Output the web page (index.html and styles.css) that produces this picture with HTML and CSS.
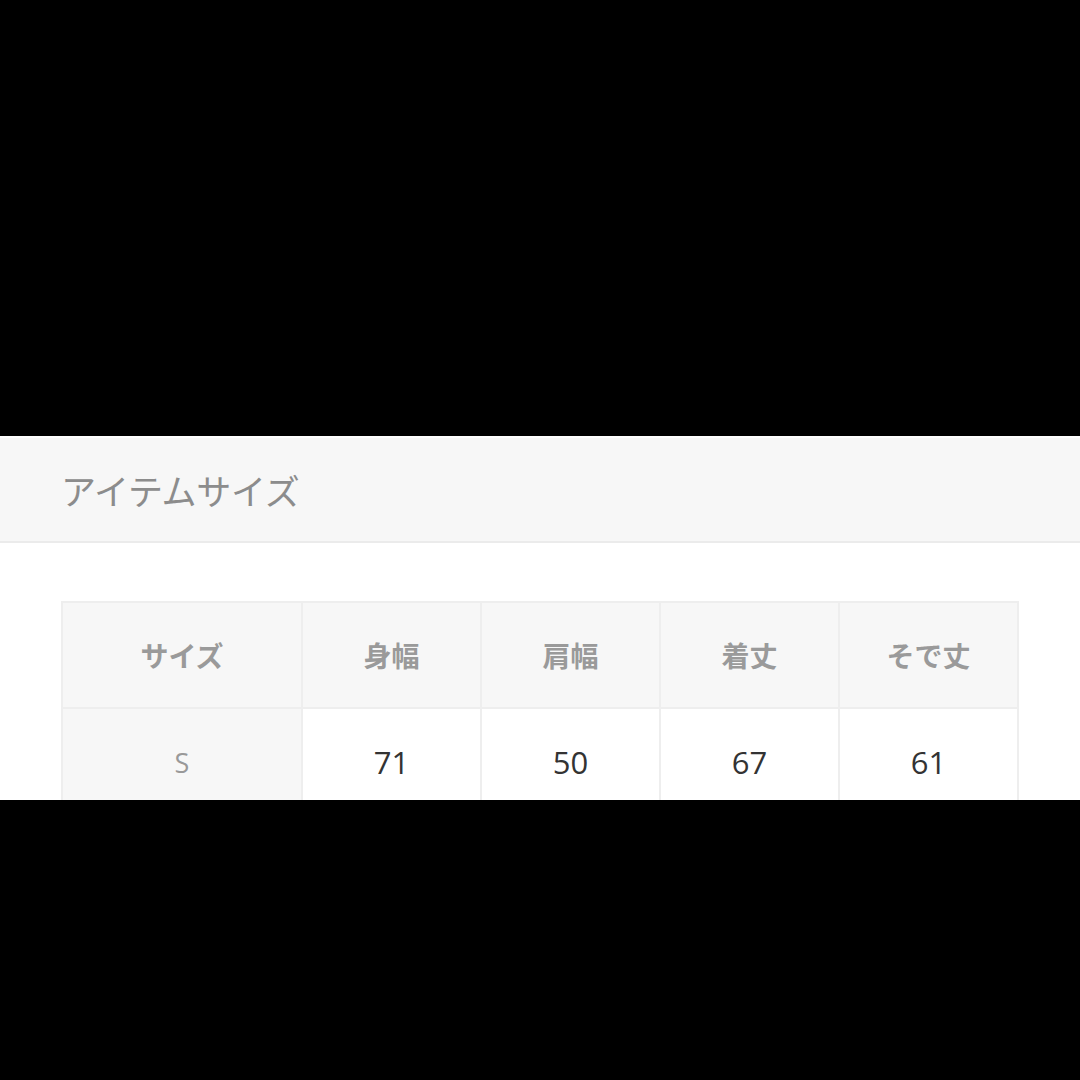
FILE: index.html
```html
<!DOCTYPE html>
<html lang="ja">
<head>
    <meta charset="UTF-8">
    <meta name="viewport" content="width=device-width, initial-scale=1.0">
    <title>アイテムサイズ</title>
    <link rel="stylesheet" href="styles.css">
</head>
<body>
    <div class="top-space"></div>

    <div class="panel">
        <div class="panel-header">
            <h2>アイテムサイズ</h2>
        </div>

        <table class="size-table">
            <thead>
                <tr>
                    <th class="col-size">サイズ</th>
                    <th>身幅</th>
                    <th>肩幅</th>
                    <th>着丈</th>
                    <th>そで丈</th>
                </tr>
            </thead>
            <tbody>
                <tr>
                    <td class="size-name">S</td>
                    <td>71</td>
                    <td>50</td>
                    <td>67</td>
                    <td>61</td>
                </tr>
            </tbody>
        </table>
    </div>
</body>
</html>
```

FILE: styles.css
```css
body {
    margin: 0;
    padding: 0;
    background: #000;
    font-family: 'Open Sans', 'Noto Sans CJK JP', sans-serif;
}

.top-space {
    height: 436px;
}

.panel {
    height: 364px;
    overflow: hidden;
    background: #fff;
    padding-top: 2px;
    box-sizing: border-box;
}

.panel-header {
    height: 103px;
    background: #f7f7f7;
    border-bottom: 2px solid #ebebeb;
    display: flex;
    align-items: center;
    padding-left: 61px;
}

.panel-header h2 {
    margin: 0;
    font-family: 'Noto Sans CJK JP', sans-serif;
    font-weight: 400;
    font-size: 35px;
    color: #8c8c8c;
    letter-spacing: -0.3px;
}

.size-table {
    margin: 58px 0 0 61px;
    width: 958px;
    border-collapse: collapse;
    table-layout: fixed;
    border: 2px solid #eeeeee;
}

.size-table th,
.size-table td {
    border: 2px solid #eeeeee;
    text-align: center;
    padding: 0;
}

.size-table th {
    height: 104px;
    background: #f7f7f7;
    font-family: 'Noto Sans CJK JP', sans-serif;
    font-weight: 700;
    font-size: 28px;
    color: #9a9a9a;
}

.size-table .col-size {
    width: 238px;
}

.size-table td {
    height: 104px;
    padding-top: 4px;
    box-sizing: border-box;
    font-size: 31px;
    color: #333;
    background: #fff;
}

.size-table .size-name {
    background: #f7f7f7;
    color: #999;
    font-size: 27px;
}
```
